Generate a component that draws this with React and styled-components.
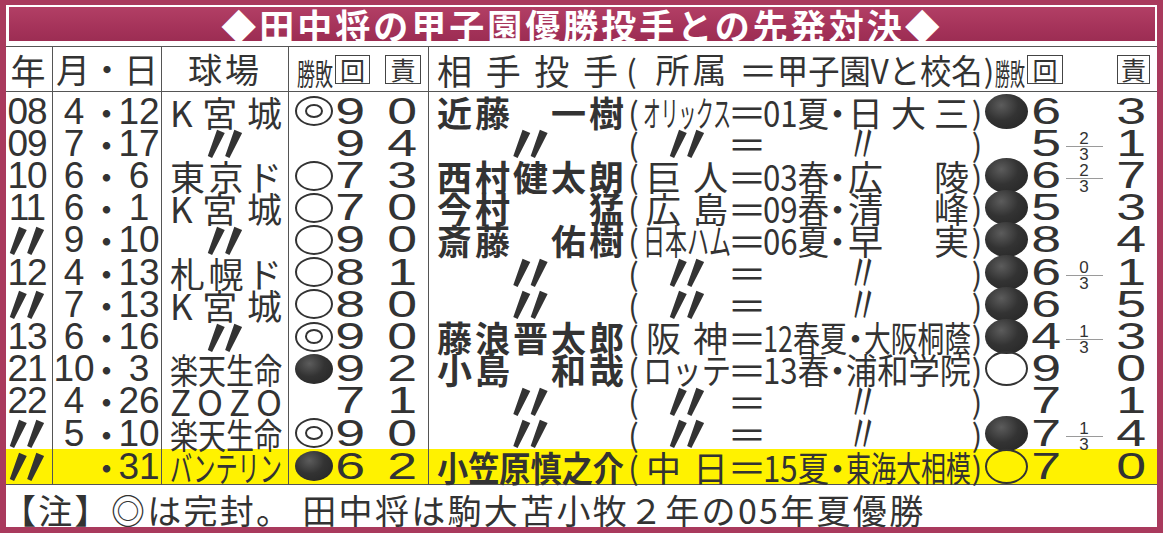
import React, { useLayoutEffect, useRef, useState } from 'react';
import styled, { createGlobalStyle, css } from 'styled-components';

const INK = '#333';
const RULE = '#555';
const JP = '"Noto Sans CJK JP", "Noto Sans", sans-serif';
const LAT = '"Liberation Sans", Arial, sans-serif';

const GlobalStyle = createGlobalStyle`
  html, body { margin: 0; padding: 0; }
  body {
    width: 1163px;
    height: 533px;
    overflow: hidden;
    background: #a93a5d;
    font-family: ${JP};
    color: ${INK};
  }
`;

const Frame = styled.div`
  margin: 5px 6px 0;
  height: 522px;
  box-sizing: border-box;
  padding-top: 2px;
  background: #fff;
  display: flex;
  flex-direction: column;
`;

const TitleBar = styled.div`
  margin: 0 2px 0 3px;
  height: 34px;
  background: linear-gradient(180deg, #b23f65 0%, #a5335a 60%, #9c2d53 100%);
  color: #fff;
  display: flex;
  align-items: center;
  justify-content: center;
  font-weight: 700;
  font-size: 35px;
  letter-spacing: 3px;
  line-height: 1;
`;

const Table = styled.div`
  margin-top: 5px;
  border-top: 1.5px solid ${RULE};
  border-bottom: 1.5px solid ${RULE};
`;

const Row = styled.div`
  display: grid;
  grid-template-columns: 47px 109px 127px 140px 1fr;
  grid-template-rows: ${p => p.$h}px;
  height: ${p => p.$h}px;
  background: ${p => (p.$hl ? '#fff200' : 'transparent')};
  ${p => p.$head && css`border-bottom: 1.5px solid ${RULE};`}
  & > * { padding-top: ${p => p.$pt || 0}px; }
`;

const Cell = styled.div`
  box-sizing: border-box;
  min-height: 0;
  border-right: 1.5px solid ${RULE};
  display: flex;
  align-items: center;
  justify-content: ${p => p.$justify || 'center'};
  padding-left: ${p => p.$pl || 0}px;
  padding-right: ${p => p.$pr || 0}px;
  white-space: nowrap;
  font-size: 35px;
  line-height: 1;
`;

const OppCell = styled.div`
  box-sizing: border-box;
  min-height: 0;
  display: flex;
  align-items: center;
  padding-left: 8px;
  white-space: nowrap;
  font-size: 35px;
  line-height: 1;
`;

const Slot = styled.div`
  flex: ${p => (p.$grow ? '1 1 auto' : 'none')};
  width: ${p => (p.$w ? `${p.$w}px` : 'auto')};
  box-sizing: border-box;
  display: flex;
  align-items: center;
  justify-content: ${p => p.$justify || 'center'};
  padding-left: ${p => p.$pl || 0}px;
  height: 100%;
`;

const HeadText = styled.span`
  font-size: ${p => p.$fs || 34}px;
  letter-spacing: ${p => p.$ls || 0}px;
`;

const BoxChar = styled.span`
  flex: none;
  box-sizing: border-box;
  width: ${p => p.$w || 35}px;
  height: 29px;
  margin-left: ${p => p.$ml || 0}px;
  border: 1.5px solid #444;
  display: flex;
  align-items: center;
  justify-content: center;
  font-size: 25px;
  line-height: 1;
`;

const Digits = styled.span`
  font-family: ${LAT};
  font-size: 37px;
  letter-spacing: ${p => p.$ls || 0}px;
`;

const Num = styled.span`
  display: inline-block;
  font-family: ${LAT};
  font-size: 37px;
  transform: scaleX(1.45);
`;

const Name = styled.div`
  font-weight: 700;
  font-size: 35px;
  display: flex;
`;

const Paren = styled.span`
  font-size: 31px;
`;

const Eq = styled.span`
  display: inline-block;
  font-size: 36px;
  transform: scaleX(1.1);
`;

const Ditto = styled.span`
  display: inline-block;
  font-weight: 700;
  font-size: 56px;
  line-height: 1;
  transform: translateY(-3px);
`;

const ThinDitto = styled.span`
  display: inline-block;
  font-weight: 400;
  font-size: 56px;
  line-height: 1;
  transform: translate(-4px, -3px) scaleX(0.55);
`;

const Mark = styled.span`
  position: relative;
  flex: none;
  display: inline-block;
  box-sizing: border-box;
  width: ${p => p.$w}px;
  height: ${p => p.$h}px;
  border-radius: 50%;
  ${p =>
    p.$type === 'fill'
      ? css`background: radial-gradient(ellipse at 38% 32%, #5c5c5c 0%, #333 45%, #232323 100%);`
      : css`border: 2.2px solid ${INK};`}
  ${p =>
    p.$type === 'double' &&
    css`
      &::after {
        content: '';
        position: absolute;
        left: 23%;
        right: 23%;
        top: 22%;
        bottom: 22%;
        border: 2px solid ${INK};
        border-radius: 50%;
      }
    `}
`;

const FracBox = styled.span`
  display: inline-flex;
  flex-direction: column;
  align-items: center;
  width: 37px;
  font-family: ${LAT};
  font-size: 17px;
  line-height: 13px;
  transform: translateY(3px);
`;

const FracTop = styled.span`
  display: block;
  width: 100%;
  text-align: center;
  border-bottom: 1px solid #9a9a9a;
  padding-bottom: 1px;
`;

const FracBottom = styled.span`
  padding-top: 1px;
`;

const Note = styled.div`
  flex: 1;
  display: flex;
  align-items: center;
  margin-left: -4px;
  font-size: 34px;
  letter-spacing: 2.3px;
  white-space: nowrap;
`;

const FitBox = styled.div`
  flex: none;
  width: ${p => p.$w}px;
  display: flex;
  align-items: center;
`;

const FitInner = styled.span`
  flex: none;
  display: inline-block;
  white-space: nowrap;
  transform-origin: 0 50%;
`;

const SpreadBox = styled.div`
  flex: none;
  width: ${p => p.$w}px;
  box-sizing: border-box;
  padding: 0 ${p => p.$pad || 0}px;
  display: flex;
  justify-content: space-between;
  align-items: center;
`;

function Fit({ w, children }) {
  const inner = useRef(null);
  const [sx, setSx] = useState(1);
  useLayoutEffect(() => {
    const measure = () => {
      const n = inner.current ? inner.current.offsetWidth : 0;
      if (n) setSx(w / n);
    };
    measure();
    if (document.fonts && document.fonts.ready) document.fonts.ready.then(measure);
  }, [w, children]);
  return (
    <FitBox $w={w}>
      <FitInner ref={inner} style={{ transform: `scaleX(${sx})` }}>{children}</FitInner>
    </FitBox>
  );
}

function Spread({ w, text, pad }) {
  return (
    <SpreadBox $w={w} $pad={pad}>
      {[...text].map((c, i) => (
        <span key={i}>{c}</span>
      ))}
    </SpreadBox>
  );
}

// text helpers: sp = spread over the slot, fit = squeeze into the slot
const sp = (t, pad) => ({ t, pad, mode: 'sp' });
const fit = t => ({ t, mode: 'fit' });
const DITTO = { t: '〃', mode: 'ditto' };

function Words({ v, w }) {
  if (!v) return null;
  if (v.mode === 'ditto') return <Ditto>〃</Ditto>;
  if (v.mode === 'fit') return <Fit w={w}>{v.t}</Fit>;
  return <Spread w={w} text={v.t} pad={v.pad} />;
}

function Frac({ v }) {
  if (!v) return null;
  const [a, b] = v.split('/');
  return (
    <FracBox>
      <FracTop>{a}</FracTop>
      <FracBottom>{b}</FracBottom>
    </FracBox>
  );
}

const rows = [
  { y: '08', m: '4', d: '12', park: sp('K宮城'), mk: 'double', inn: '9', er: '0',
    name: sp('近藤　一樹'), team: fit('オリックス'), yr: '01夏', school: sp('日大三', 2), rmk: 'fill', rinn: '6', frac: null, rer: '3' },
  { y: '09', m: '7', d: '17', park: DITTO, mk: null, inn: '9', er: '4',
    name: DITTO, team: DITTO, same: true, rmk: null, rinn: '5', frac: '2/3', rer: '1' },
  { y: '10', m: '6', d: '6', park: sp('東京ド'), mk: 'open', inn: '7', er: '3',
    name: sp('西村健太朗'), team: sp('巨人', 3), yr: '03春', school: sp('広陵', 2), rmk: 'fill', rinn: '6', frac: '2/3', rer: '7' },
  { y: '11', m: '6', d: '1', park: sp('K宮城'), mk: 'open', inn: '7', er: '0',
    name: sp('今村　　猛'), team: sp('広島', 3), yr: '09春', school: sp('清峰', 2), rmk: 'fill', rinn: '5', frac: null, rer: '3' },
  { y: DITTO, m: '9', d: '10', park: DITTO, mk: 'open', inn: '9', er: '0',
    name: sp('斎藤　佑樹'), team: fit('日本ハム'), yr: '06夏', school: sp('早実', 2), rmk: 'fill', rinn: '8', frac: null, rer: '4' },
  { y: '12', m: '4', d: '13', park: sp('札幌ド'), mk: 'open', inn: '8', er: '1',
    name: DITTO, team: DITTO, same: true, rmk: 'fill', rinn: '6', frac: '0/3', rer: '1' },
  { y: DITTO, m: '7', d: '13', park: sp('K宮城'), mk: 'open', inn: '8', er: '0',
    name: DITTO, team: DITTO, same: true, rmk: 'fill', rinn: '6', frac: null, rer: '5' },
  { y: '13', m: '6', d: '16', park: DITTO, mk: 'double', inn: '9', er: '0',
    name: sp('藤浪晋太郎'), team: sp('阪神', 3), yr: '12春夏', yw: 84, school: fit('大阪桐蔭'), rmk: 'fill', rinn: '4', frac: '1/3', rer: '3' },
  { y: '21', m: '10', d: '3', park: fit('楽天生命'), mk: 'fill', inn: '9', er: '2',
    name: sp('小島　和哉'), team: fit('ロッテ'), yr: '13春', school: fit('浦和学院'), rmk: 'open', rinn: '9', frac: null, rer: '0' },
  { y: '22', m: '4', d: '26', park: sp('ZOZO'), mk: null, inn: '7', er: '1',
    name: DITTO, team: DITTO, same: true, rmk: null, rinn: '7', frac: null, rer: '1' },
  { y: DITTO, m: '5', d: '10', park: fit('楽天生命'), mk: 'double', inn: '9', er: '0',
    name: DITTO, team: DITTO, same: true, rmk: 'fill', rinn: '7', frac: '1/3', rer: '4' },
  { y: DITTO, m: '', d: '31', park: fit('バンテリン'), mk: 'fill', inn: '6', er: '2', hl: true,
    name: fit('小笠原慎之介'), team: sp('中日', 3), yr: '15夏', school: fit('東海大相模'), rmk: 'open', rinn: '7', frac: null, rer: '0' },
];

function Header() {
  return (
    <Row $h={44} $head>
      <Cell $pr={2}><HeadText $fs={35}>年</HeadText></Cell>
      <Cell><HeadText>月・日</HeadText></Cell>
      <Cell><HeadText $ls={3}>球場</HeadText></Cell>
      <Cell $justify="flex-start" $pl={8}>
        <Fit w={36}><HeadText $fs={30}>勝敗</HeadText></Fit>
        <BoxChar $ml={2}>回</BoxChar>
        <BoxChar $ml={15} $w={36}>責</BoxChar>
      </Cell>
      <OppCell>
        <Spread w={181} text="相手投手" />
        <Slot $w={27}><Paren>(</Paren></Slot>
        <Slot $w={95}><HeadText $ls={3}>所属</HeadText></Slot>
        <Slot $w={37}><Eq>＝</Eq></Slot>
        <Fit w={206}><HeadText>甲子園Vと校名</HeadText></Fit>
        <Slot $w={12}><Paren>)</Paren></Slot>
        <Fit w={30}><HeadText $fs={30}>勝敗</HeadText></Fit>
        <BoxChar $ml={2} $w={36}>回</BoxChar>
        <Slot $grow $justify="flex-end">
          <BoxChar $w={33}>責</BoxChar>
        </Slot>
        <Slot $w={7} />
      </OppCell>
    </Row>
  );
}

function DataRow({ r, first }) {
  const yw = r.yw || 66;
  return (
    <Row $h={first ? 35.3 : r.hl ? 34.5 : 32.2} $pt={first ? 3 : 0} $hl={r.hl}>
      <Cell $pr={4}>
        {r.y === DITTO ? <Ditto>〃</Ditto> : <Digits $ls={-1}>{r.y}</Digits>}
      </Cell>
      <Cell $justify="flex-start">
        <Slot $w={42}><Digits>{r.m}</Digits></Slot>
        <Slot $w={23}><span>・</span></Slot>
        <Slot $w={42}><Digits>{r.d}</Digits></Slot>
      </Cell>
      <Cell $justify={r.park === DITTO ? 'center' : 'flex-start'} $pl={r.park === DITTO ? 0 : 8}>
        <Words v={r.park} w={112} />
      </Cell>
      <Cell $justify="flex-start">
        <Slot $w={50}>{r.mk && <Mark $type={r.mk} $w={38} $h={30} />}</Slot>
        <Slot $w={22}><Num>{r.inn}</Num></Slot>
        <Slot $w={66} $pl={17}><Num>{r.er}</Num></Slot>
      </Cell>
      <OppCell>
        <Slot $w={187}>
          {r.name === DITTO ? <Ditto>〃</Ditto> : <Name><Words v={r.name} w={187} /></Name>}
        </Slot>
        <Slot $w={19}><Paren>(</Paren></Slot>
        <Slot $w={88}><Words v={r.team} w={88} /></Slot>
        <Slot $w={32}><Eq>＝</Eq></Slot>
        {r.same ? (
          <Slot $w={208}><ThinDitto>〃</ThinDitto></Slot>
        ) : (
          <>
            <Slot $w={yw}><Fit w={yw}>{r.yr}</Fit></Slot>
            <Slot $w={17}><span>・</span></Slot>
            <Slot $w={191 - yw}><Words v={r.school} w={191 - yw} /></Slot>
          </>
        )}
        <Slot $w={12}><Paren>)</Paren></Slot>
        <Slot $w={47}>{r.rmk && <Mark $type={r.rmk} $w={43} $h={35} />}</Slot>
        <Slot $w={32}><Num>{r.rinn}</Num></Slot>
        <Slot $w={44}><Frac v={r.frac} /></Slot>
        <Slot $w={51}><Num>{r.rer}</Num></Slot>
      </OppCell>
    </Row>
  );
}

export default function App() {
  return (
    <>
      <GlobalStyle />
      <Frame>
        <TitleBar>◆田中将の甲子園優勝投手との先発対決◆</TitleBar>
        <Table>
          <Header />
          {rows.map((r, i) => (
            <DataRow key={i} r={r} first={i === 0} />
          ))}
        </Table>
        <Note>【注】◎は完封。 田中将は駒大苫小牧２年の05年夏優勝</Note>
      </Frame>
    </>
  );
}
